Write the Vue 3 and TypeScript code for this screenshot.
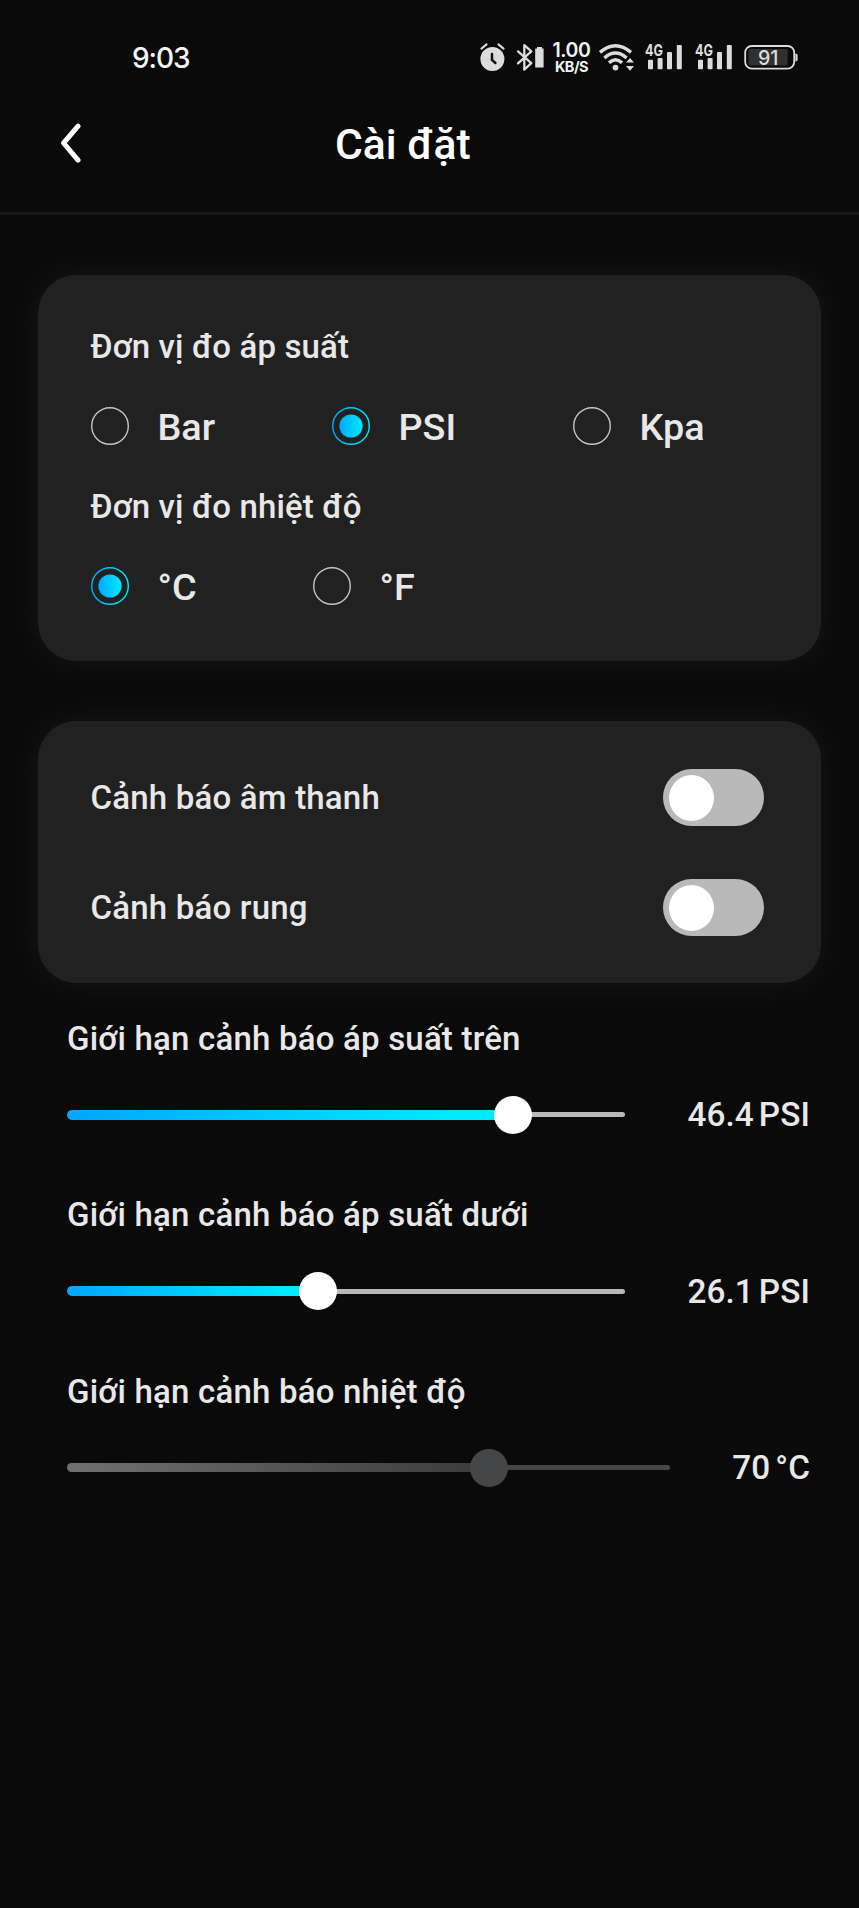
<script setup lang="ts">
import { ref } from 'vue'

interface Limit {
  label: string
  value: string
  unit: string
  width: number
  thumb: number
  disabled: boolean
}

const pressureUnits: string[] = ['Bar', 'PSI', 'Kpa']
const temperatureUnits: string[] = ['°C', '°F']
const pressureUnit = ref('PSI')
const temperatureUnit = ref('°C')

const alerts = ref([
  { label: 'Cảnh báo âm thanh', on: false },
  { label: 'Cảnh báo rung', on: false },
])

const limits: Limit[] = [
  { label: 'Giới hạn cảnh báo áp suất trên', value: '46.4', unit: 'PSI', width: 558, thumb: 446.4, disabled: false },
  { label: 'Giới hạn cảnh báo áp suất dưới', value: '26.1', unit: 'PSI', width: 558, thumb: 251, disabled: false },
  { label: 'Giới hạn cảnh báo nhiệt độ', value: '70', unit: '°C', width: 603.4, thumb: 422.4, disabled: true },
]
</script>

<template>
  <div class="screen">
    <div class="status">
      <span class="clock">9:03</span>
      <div class="indicators">
        <svg class="alarm" width="26" height="32" viewBox="0 0 26 32">
          <circle cx="12.4" cy="18" r="12" fill="#dcdcdc" />
          <path d="M1.4 7.6 6.6 3.4M23.6 7.6 18.4 3.4" stroke="#dcdcdc" stroke-width="2" stroke-linecap="round" />
          <path d="M12 13V19L15.4 22" fill="none" stroke="#111" stroke-width="2.5" stroke-linecap="round" />
        </svg>
        <svg class="bluetooth" width="28" height="32" viewBox="0 0 28 32">
          <path d="M2 10.4 15.3 22.2 8.3 28.6V4.2L15.3 10.4 2 22.4" fill="none" stroke="#dcdcdc" stroke-width="2.3" stroke-linejoin="round" stroke-linecap="round" />
          <path d="M21 6H26V7.6H27.6V26.6H19.2V7.6H21Z" fill="#dcdcdc" />
        </svg>
        <div class="speed">
          <span class="rate">1.00</span>
          <span class="rate-unit">KB/S</span>
        </div>
        <svg class="wifi" width="37" height="32" viewBox="0 0 37 32">
          <g fill="none" stroke="#dcdcdc" stroke-width="3.4">
            <path d="M2 11.4Q17.5-1.8 33 11.4" />
            <path d="M6.4 16.9Q17.5 7 28.6 16.9" />
            <path d="M11 21.8Q17.5 15.6 24 21.8" />
          </g>
          <circle cx="17.5" cy="26.6" r="2.9" fill="#dcdcdc" />
          <path d="M28 21.6 32 17 36 21.6ZM28 25 32 29.8 36 25Z" fill="#dcdcdc" />
        </svg>
        <svg v-for="sim in 2" :key="sim" class="signal" width="38" height="32" viewBox="0 0 38 32">
          <g fill="#dcdcdc">
            <rect x="3" y="18.8" width="5" height="9.4" rx="1" />
            <rect x="12.6" y="17" width="5" height="11.2" rx="1" />
            <rect x="22" y="11" width="5" height="17.2" rx="1" />
            <rect x="31.8" y="4" width="5" height="24.2" rx="1" />
          </g>
          <text class="generation" x="0" y="15" textLength="18" lengthAdjust="spacingAndGlyphs">4G</text>
        </svg>
        <svg class="battery" width="54" height="32" viewBox="0 0 54 32">
          <rect x="1.2" y="5" width="49" height="22.6" rx="6.5" fill="#0a0a0a" stroke="#dcdcdc" stroke-width="1.8" />
          <path d="M7 8H43.6V24.6H7Q4.4 24.6 4.4 22V10.6Q4.4 8 7 8Z" fill="#303030" />
          <path d="M51.4 12.6Q53.6 12.6 53.6 14.6V18.6Q53.6 20.6 51.4 20.6Z" fill="#dcdcdc" />
          <text class="charge" x="14" y="23.6" textLength="20.5" lengthAdjust="spacingAndGlyphs">91</text>
        </svg>
      </div>
    </div>

    <header class="header">
      <svg class="back" width="24" height="42" viewBox="0 0 24 42">
        <path d="M19 3.2 4.6 20 19 37.2" fill="none" stroke="#fff" stroke-width="5" stroke-linecap="round" stroke-linejoin="round" />
      </svg>
      <h1 class="title">Cài đặt</h1>
    </header>

    <svg width="0" height="0" class="defs">
      <defs>
        <linearGradient id="accent" x1="0" x2="1" y1="0" y2="0">
          <stop offset="0" stop-color="#00aaff" />
          <stop offset="1" stop-color="#00eaff" />
        </linearGradient>
      </defs>
    </svg>

    <section class="card units">
      <h2 class="label">Đơn vị đo áp suất</h2>
      <div class="options pressure">
        <div v-for="unit in pressureUnits" :key="unit" class="option" @click="pressureUnit = unit">
          <svg class="radio" width="38" height="38" viewBox="0 0 38 38">
            <circle cx="19" cy="19" r="18.3" fill="none" :stroke="unit === pressureUnit ? 'url(#accent)' : '#c4c4c4'" stroke-width="1.4" />
            <circle v-if="unit === pressureUnit" cx="19" cy="19" r="11.6" fill="url(#accent)" />
          </svg>
          <span class="option-text">{{ unit }}</span>
        </div>
      </div>
      <h2 class="label second">Đơn vị đo nhiệt độ</h2>
      <div class="options temperature">
        <div v-for="unit in temperatureUnits" :key="unit" class="option" @click="temperatureUnit = unit">
          <svg class="radio" width="38" height="38" viewBox="0 0 38 38">
            <circle cx="19" cy="19" r="18.3" fill="none" :stroke="unit === temperatureUnit ? 'url(#accent)' : '#c4c4c4'" stroke-width="1.4" />
            <circle v-if="unit === temperatureUnit" cx="19" cy="19" r="11.6" fill="url(#accent)" />
          </svg>
          <span class="option-text">{{ unit }}</span>
        </div>
      </div>
    </section>

    <section class="card alerts">
      <div v-for="alert in alerts" :key="alert.label" class="alert">
        <span class="label">{{ alert.label }}</span>
        <div class="switch" :class="{ on: alert.on }" @click="alert.on = !alert.on">
          <span class="knob"></span>
        </div>
      </div>
    </section>

    <section class="limits">
      <div v-for="limit in limits" :key="limit.label" class="limit" :class="{ disabled: limit.disabled }">
        <h2 class="label">{{ limit.label }}</h2>
        <div class="control">
          <div class="slider" :style="{ width: limit.width + 'px' }">
            <span class="fill" :style="{ width: limit.thumb + 'px' }"></span>
            <span class="thumb"></span>
            <span class="rest"></span>
          </div>
          <div class="reading">
            <span>{{ limit.value }}</span>
            <span>{{ limit.unit }}</span>
          </div>
        </div>
      </div>
    </section>
  </div>
</template>

<style>
body {
  background: #0a0a0a;
}
</style>

<style scoped>
.screen {
  box-sizing: border-box;
  width: 859px;
  height: 1908px;
  overflow: hidden;
  background: #0a0a0a;
  color: #e8e8e8;
  font-family: Roboto, "Noto Sans", sans-serif;
  font-weight: 500;
}

.status {
  display: flex;
  justify-content: space-between;
  box-sizing: border-box;
  height: 91px;
  padding: 41px 61px 0 132px;
}

.clock {
  color: #f5f5f5;
  font: 500 28px/34px Inter, sans-serif;
  letter-spacing: -1.1px;
}

.indicators {
  display: flex;
  height: 32px;
}

.indicators svg {
  display: block;
  overflow: visible;
}

.bluetooth {
  margin-left: 10px;
}

.speed {
  display: flex;
  flex-direction: column;
  align-items: center;
  width: 39px;
  margin-left: 8px;
  color: #f2f2f2;
  font-family: Inter, sans-serif;
  white-space: nowrap;
}

.rate {
  font-size: 19.5px;
  font-weight: 600;
  line-height: 19px;
  letter-spacing: -0.4px;
}

.rate-unit {
  font-size: 14.5px;
  font-weight: 700;
  line-height: 14px;
  letter-spacing: -0.5px;
}

.wifi {
  margin-left: 7px;
}

.signal {
  margin-left: 10px;
}

.signal + .signal {
  margin-left: 12px;
}

.battery {
  margin-left: 11px;
}

.generation {
  fill: #dcdcdc;
  font: 700 16.5px Inter, sans-serif;
}

.charge {
  fill: #dcdcdc;
  font: 500 20px Inter, sans-serif;
}

.header {
  display: flex;
  align-items: flex-start;
  height: 121px;
  border-bottom: 3px solid #171717;
}

.back {
  display: block;
  margin: 32px 0 0 59px;
}

.title {
  margin: 28px 0 0 252px;
  color: #fff;
  font-size: 42.6px;
  font-weight: 500;
  line-height: 50px;
}

.defs {
  display: block;
}

.card {
  box-sizing: border-box;
  width: 783px;
  border-radius: 38px;
  background: #212121;
  box-shadow: 0 0 36px rgba(255, 255, 255, 0.055);
}

.units {
  height: 386.5px;
  margin: 59.5px 0 0 38px;
  padding: 52.5px 0 0 52.5px;
}

.units .label {
  letter-spacing: 0.12px;
}

.label {
  display: block;
  margin: 0;
  font-size: 33px;
  font-weight: 500;
  line-height: 40px;
  letter-spacing: 0.2px;
  white-space: nowrap;
}

.label.second {
  margin-top: 42px;
}

.options {
  display: grid;
  height: 38px;
  margin-top: 40px;
}

.pressure {
  grid-template-columns: repeat(3, 241px);
}

.temperature {
  grid-template-columns: repeat(2, 222px);
}

.option {
  display: flex;
  align-items: center;
}

.radio {
  display: block;
  margin-right: 29px;
}

.option-text {
  padding-top: 2px;
  font-size: 37.8px;
  line-height: 36px;
}

.alerts {
  display: flex;
  flex-direction: column;
  gap: 53px;
  height: 262px;
  margin: 60px 0 0 38px;
  padding: 48px 57px 0 52.5px;
}

.alert {
  display: flex;
  align-items: center;
  justify-content: space-between;
}

.switch {
  display: flex;
  align-items: center;
  box-sizing: border-box;
  width: 101px;
  height: 57px;
  padding: 0 6px;
  border-radius: 28.5px;
  background: #b9b9b9;
}

.switch.on {
  justify-content: flex-end;
  background: #00c8ff;
}

.knob {
  width: 45px;
  height: 46px;
  border-radius: 50%;
  background: #fff;
}

.limits {
  margin: 36px 0 0 67px;
}

.limit {
  height: 176.4px;
}

.control {
  display: flex;
  align-items: center;
  justify-content: space-between;
  width: 743px;
  height: 40px;
  margin-top: 35.8px;
}

.slider {
  display: flex;
  align-items: center;
}

.fill {
  height: 9.5px;
  border-radius: 5px 0 0 5px;
  background: linear-gradient(90deg, #00a6ff, #00eaff 88%);
}

.thumb {
  flex: none;
  width: 38px;
  height: 38px;
  margin: 0 -19px;
  border-radius: 50%;
  background: #fff;
  z-index: 1;
}

.rest {
  flex: 1;
  height: 5px;
  border-radius: 0 2.5px 2.5px 0;
  background: #b9b9b9;
}

.disabled .fill {
  background: linear-gradient(90deg, #707070, #3a3a3a);
}

.disabled .thumb {
  background: #454648;
}

.disabled .rest {
  background: #464646;
}

.reading {
  display: flex;
  gap: 5px;
  padding-top: 1px;
  font-size: 33.3px;
  line-height: 40px;
  letter-spacing: 0.1px;
}
</style>
